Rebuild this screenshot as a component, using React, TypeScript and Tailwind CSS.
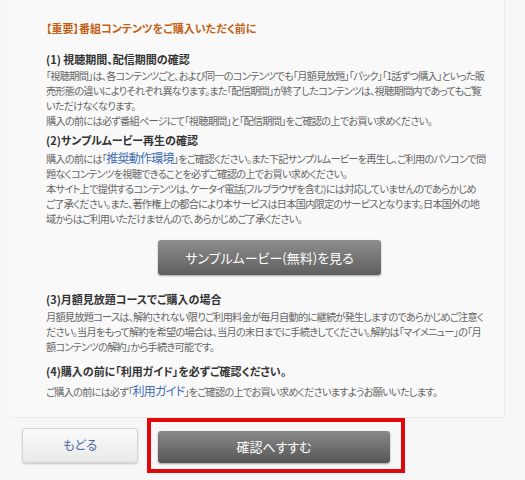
const FONT = {
  fontFamily: '"MS PGothic", "Noto Sans CJK JP", sans-serif',
  fontFeatureSettings: '"palt"',
};

const Body = ({ lines }: { lines: React.ReactNode[] }) => (
  <div className="text-[10.2px] leading-[15px] text-[#666] tracking-[-0.75px]">
    {lines.map((l, i) => (
      <div key={i} className="whitespace-nowrap">
        {l}
      </div>
    ))}
  </div>
);

const Link = ({ children }: { children: React.ReactNode }) => (
  <span className="text-[12px] text-[#3d6cb4]">{children}</span>
);

export default function App() {
  return (
    <div className="min-h-[480px] w-[525px] bg-[#f7f7f7]" style={FONT}>
      <div className="ml-[10px] w-[495px] border-r border-b border-[#ececec] bg-[#f9f9f9] pt-[21px] pb-[18px] pl-[36px]">
        <h1 className="text-[11px] leading-[15px] font-bold text-[#c45f16]">
          【重要】番組コンテンツをご購入いただく前に
        </h1>

        {/* (1) */}
        <h2 className="mt-[16px] text-[11px] leading-[15px] font-bold text-[#333]">
          (1) 視聴期間、配信期間の確認
        </h2>
        <div className="mt-[1px]">
          <Body
            lines={[
              "「視聴期間」は、各コンテンツごと、および同一のコンテンツでも「月額見放題」「パック」「1話ずつ購入」といった販",
              "売形態の違いによりそれぞれ異なります。また「配信期間」が終了したコンテンツは、視聴期間内であってもご覧",
              "いただけなくなります。",
              "購入の前には必ず番組ページにて「視聴期間」と「配信期間」をご確認の上でお買い求めください。",
            ]}
          />
        </div>

        {/* (2) */}
        <h2 className="mt-[5px] text-[11px] leading-[15px] font-bold text-[#333]">
          (2)サンプルムービー再生の確認
        </h2>
        <div className="mt-[2px]">
          <Body
            lines={[
              <>
                購入の前には「<Link>推奨動作環境</Link>」をご確認ください。また下記サンプルムービーを再生し、ご利用のパソコンで問
              </>,
              "題なくコンテンツを視聴できることを必ずご確認の上でお買い求めください。",
              "本サイト上で提供するコンテンツは、ケータイ電話(フルブラウザを含む)には対応していませんのであらかじめ",
              "ご了承ください。また、著作権上の都合により本サービスは日本国内限定のサービスとなります。日本国外の地",
              "域からはご利用いただけませんので、あらかじめご了承ください。",
            ]}
          />
        </div>

        <button className="mt-[14px] ml-[112px] flex h-[35px] w-[223px] items-center justify-center rounded-[3px] bg-gradient-to-b from-[#8e8e8e] to-[#5f5f5f] text-[13px] text-white shadow-[0_1px_2px_rgba(0,0,0,0.35)]">
          サンプルムービー(無料)を見る
        </button>

        {/* (3) */}
        <h2 className="mt-[17px] text-[11px] leading-[15px] font-bold text-[#333]">
          (3)月額見放題コースでご購入の場合
        </h2>
        <div className="mt-[2px]">
          <Body
            lines={[
              "月額見放題コースは、解約されない限りご利用料金が毎月自動的に継続が発生しますのであらかじめご注意く",
              "ださい。当月をもって解約を希望の場合は、当月の末日までに手続きしてください。解約は「マイメニュー」の「月",
              "額コンテンツの解約」から手続き可能です。",
            ]}
          />
        </div>

        {/* (4) */}
        <h2 className="mt-[10px] text-[11px] leading-[15px] font-bold text-[#333]">
          (4)購入の前に「利用ガイド」を必ずご確認ください。
        </h2>
        <div className="mt-[4px]">
          <Body
            lines={[
              <>
                ご購入の前には必ず「<Link>利用ガイド</Link>」をご確認の上でお買い求めくださいますようお願いいたします。
              </>,
            ]}
          />
        </div>
      </div>

      {/* Buttons */}
      <div className="flex items-center pl-[22px]">
        <button className="flex h-[35px] w-[116px] items-center justify-center rounded-[3px] border border-[#d4d4d4] bg-gradient-to-b from-[#fbfbfb] to-[#e9e9e9] text-[12.5px] text-[#4a6aa8] shadow-[0_1px_2px_rgba(0,0,0,0.2)]">
          もどる
        </button>
        <div className="ml-[9px] border-[4px] border-[#e0080b] pt-[9px] pb-[6px] pl-[7px] pr-[11px]">
          <button className="flex h-[32px] w-[232px] items-center justify-center rounded-[3px] bg-gradient-to-b from-[#8a8a8a] to-[#565656] text-[13px] text-white shadow-[0_1px_2px_rgba(0,0,0,0.35)]">
            確認へすすむ
          </button>
        </div>
      </div>
    </div>
  );
}
